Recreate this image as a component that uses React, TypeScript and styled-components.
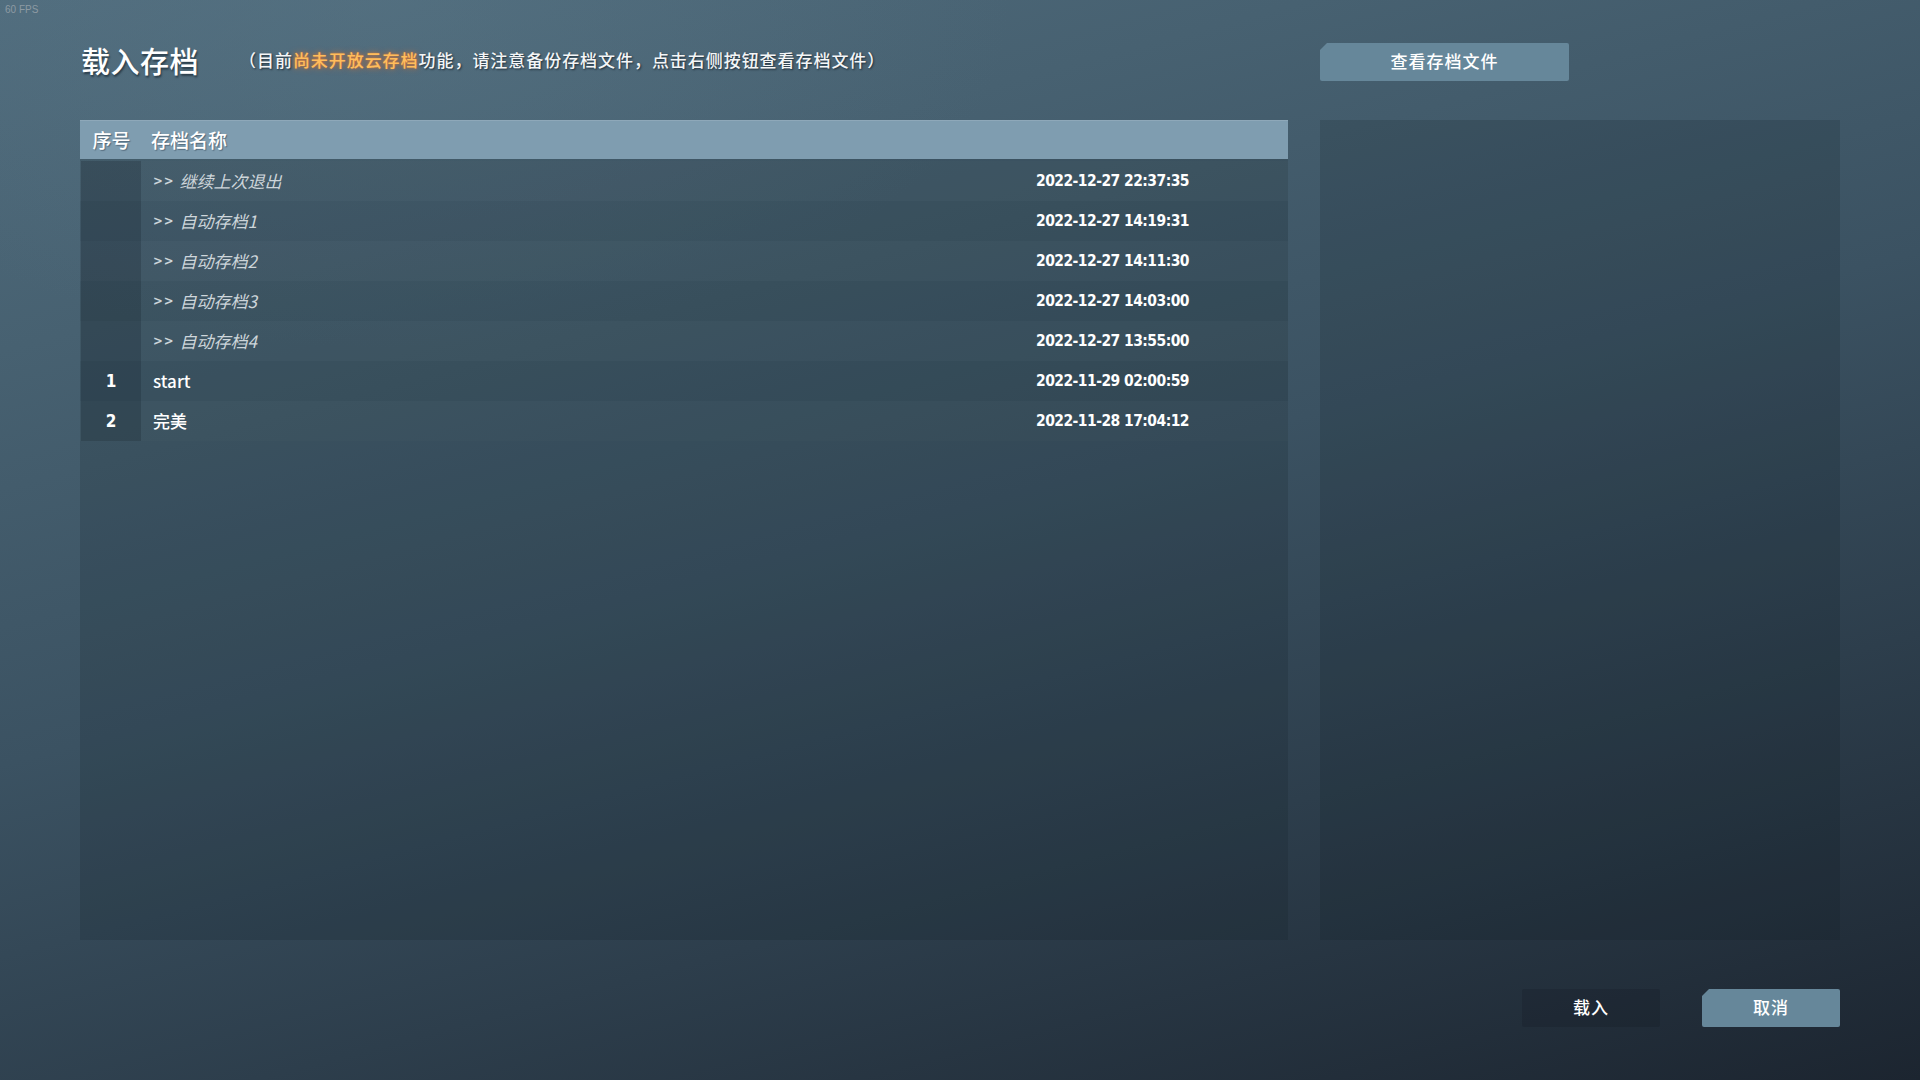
import React from 'react';
import styled, { createGlobalStyle } from 'styled-components';

const cjk = `"Noto Sans CJK SC", "Noto Sans", sans-serif`;
const digits = `"DejaVu Sans Condensed", "DejaVu Sans", "Noto Sans CJK SC", sans-serif`;

const GlobalStyle = createGlobalStyle`
  html, body {
    margin: 0;
    padding: 0;
    width: 100%;
    height: 100%;
    overflow: hidden;
  }
  body {
    font-family: ${cjk};
    color: #ffffff;
    background: #2c3b48;
  }
  #root {
    height: 100%;
  }
`;

interface SaveEntry {
  index?: number;
  name: string;
  time: string;
  auto?: boolean;
}

const saves: SaveEntry[] = [
  { name: '继续上次退出', time: '2022-12-27 22:37:35', auto: true },
  { name: '自动存档1', time: '2022-12-27 14:19:31', auto: true },
  { name: '自动存档2', time: '2022-12-27 14:11:30', auto: true },
  { name: '自动存档3', time: '2022-12-27 14:03:00', auto: true },
  { name: '自动存档4', time: '2022-12-27 13:55:00', auto: true },
  { index: 1, name: 'start', time: '2022-11-29 02:00:59' },
  { index: 2, name: '完美', time: '2022-11-28 17:04:12' },
];

function App() {
  return (
    <>
      <GlobalStyle />
      <PAGE>
        <FPS>60 FPS</FPS>

        <HEADER>
          <TITLE_ROW>
            <TITLE>载入存档</TITLE>
            <NOTE>
              （目前<HIGHLIGHT>尚未开放云存档</HIGHLIGHT>功能，请注意备份存档文件，点击右侧按钮查看存档文件）
            </NOTE>
          </TITLE_ROW>
          <ACTIONS>
            <BUTTON $variant='primary' $width={249}>
              查看存档文件
            </BUTTON>
          </ACTIONS>
        </HEADER>

        <MAIN>
          <PANEL>
            <HEAD_ROW>
              <HEAD_CELL $center>序号</HEAD_CELL>
              <HEAD_CELL>存档名称</HEAD_CELL>
              <HEAD_CELL />
            </HEAD_ROW>
            {saves.map((save, i) => (
              <ROW key={save.name} $odd={i % 2 === 1}>
                <INDEX_CELL>{save.index ?? ''}</INDEX_CELL>
                <NAME_CELL $auto={save.auto}>
                  {save.auto ? (
                    <>
                      <ARROWS>&gt;&gt;</ARROWS>
                      {save.name}
                    </>
                  ) : (
                    save.name
                  )}
                </NAME_CELL>
                <TIME_CELL>{save.time}</TIME_CELL>
              </ROW>
            ))}
          </PANEL>
          <PANEL />
        </MAIN>

        <FOOTER>
          <BUTTON $variant='dark' $width={138}>
            载入
          </BUTTON>
          <BUTTON $variant='primary' $width={138}>
            取消
          </BUTTON>
        </FOOTER>
      </PAGE>
    </>
  );
}

const PAGE = styled.div`
  position: relative;
  box-sizing: border-box;
  width: 1920px;
  height: 1080px;
  padding: 43px 80px 0;
  background:
    radial-gradient(ellipse 900px 500px at 20% 0%, rgba(92, 122, 138, 0.35), transparent 70%),
    linear-gradient(165deg, #506c7d 0%, #476171 22%, #3b5262 48%, #2d3e4c 72%, #1c2530 100%);
`;

const FPS = styled.div`
  position: absolute;
  top: 4px;
  left: 5px;
  font-family: 'Liberation Sans', Arial, sans-serif;
  font-size: 10px;
  color: #8d9aa3;
`;

const HEADER = styled.div`
  display: grid;
  grid-template-columns: 1208px 520px;
  column-gap: 32px;
  height: 38px;
  align-items: center;
`;

const TITLE_ROW = styled.div`
  display: flex;
  align-items: center;
  gap: 40px;
  margin-top: -3px;
`;

const ACTIONS = styled.div`
  display: flex;
  align-items: center;
  height: 38px;
`;

const TITLE = styled.h1`
  margin: 0 0 0 1px;
  font-family: ${cjk};
  font-size: 29px;
  font-weight: 500;
  line-height: 1.2;
  letter-spacing: 0.5px;
  color: #ffffff;
  text-shadow: 1px 2px 2px rgba(10, 20, 30, 0.55);
`;

const NOTE = styled.p`
  margin: 0;
  font-family: ${cjk};
  font-size: 17px;
  font-weight: 500;
  line-height: 1.2;
  letter-spacing: 0.95px;
  color: #f4f6f7;
  text-shadow: 1px 1px 2px rgba(10, 20, 30, 0.7);
`;

const HIGHLIGHT = styled.span`
  color: #ffbd5c;
  text-shadow:
    0 0 6px rgba(255, 110, 30, 0.75),
    0 0 2px rgba(255, 140, 40, 0.6);
`;

const BUTTON = styled.button<{ $variant: 'primary' | 'dark'; $width: number }>`
  display: flex;
  align-items: center;
  justify-content: center;
  width: ${(p) => p.$width}px;
  height: 38px;
  border: none;
  padding: 0 0 4px;
  border-radius: 2px;
  font-family: ${cjk};
  font-size: 17px;
  font-weight: 500;
  line-height: 1;
  letter-spacing: 1px;
  color: #ffffff;
  cursor: pointer;
  background: ${(p) => (p.$variant === 'primary' ? '#66879a' : 'rgba(14, 22, 30, 0.2)')};
  clip-path: ${(p) =>
    p.$variant === 'primary'
      ? 'polygon(7px 0, 100% 0, 100% 100%, 0 100%, 0 7px)'
      : 'none'};
`;

const MAIN = styled.div`
  display: grid;
  grid-template-columns: 1208px 520px;
  column-gap: 32px;
  margin-top: 39px;
  height: 820px;
`;

const PANEL = styled.div`
  display: flex;
  flex-direction: column;
  background: rgba(12, 22, 32, 0.16);
`;

const HEAD_ROW = styled.div`
  display: grid;
  grid-template-columns: 61px 1fr 252px;
  height: 39px;
  margin-bottom: 2px;
  align-items: center;
  background: #7f9db0;
  box-shadow: inset 0 1px 0 rgba(255, 255, 255, 0.12);
`;

const HEAD_CELL = styled.div<{ $center?: boolean }>`
  font-family: ${cjk};
  font-size: 19px;
  font-weight: 500;
  color: #ffffff;
  text-shadow: 1px 1px 1px rgba(30, 45, 60, 0.45);
  text-align: ${(p) => (p.$center ? 'center' : 'left')};
  padding-left: ${(p) => (p.$center ? '2px' : '10px')};
`;

const ROW = styled.div<{ $odd: boolean }>`
  display: grid;
  grid-template-columns: 61px 1fr 252px;
  height: 40px;
  align-items: stretch;
  background: ${(p) => (p.$odd ? 'rgba(0, 0, 0, 0.025)' : 'rgba(255, 255, 255, 0.01)')};
`;

const INDEX_CELL = styled.div`
  display: flex;
  align-items: center;
  justify-content: center;
  margin-left: 1px;
  background: rgba(10, 20, 28, 0.2);
  font-family: ${digits};
  font-stretch: condensed;
  font-size: 17px;
  font-weight: 700;
  color: #ffffff;
`;

const NAME_CELL = styled.div<{ $auto?: boolean }>`
  display: flex;
  align-items: center;
  padding-left: 12px;
  padding-bottom: 2px;
  font-family: ${cjk};
  font-size: 17px;
  font-weight: ${(p) => (p.$auto ? 400 : 500)};
  font-style: ${(p) => (p.$auto ? 'italic' : 'normal')};
  color: ${(p) => (p.$auto ? '#cdd5da' : '#ffffff')};
`;

const ARROWS = styled.span`
  font-family: ${digits};
  font-size: 13px;
  font-weight: 700;
  font-style: normal;
  letter-spacing: 1px;
  margin-right: 5px;
`;

const TIME_CELL = styled.div`
  display: flex;
  align-items: center;
  font-family: ${digits};
  font-stretch: condensed;
  font-size: 15.5px;
  font-weight: 700;
  letter-spacing: -0.55px;
  color: #ffffff;
`;

const FOOTER = styled.div`
  display: flex;
  justify-content: flex-end;
  gap: 42px;
  margin-top: 49px;
`;

export default App;
